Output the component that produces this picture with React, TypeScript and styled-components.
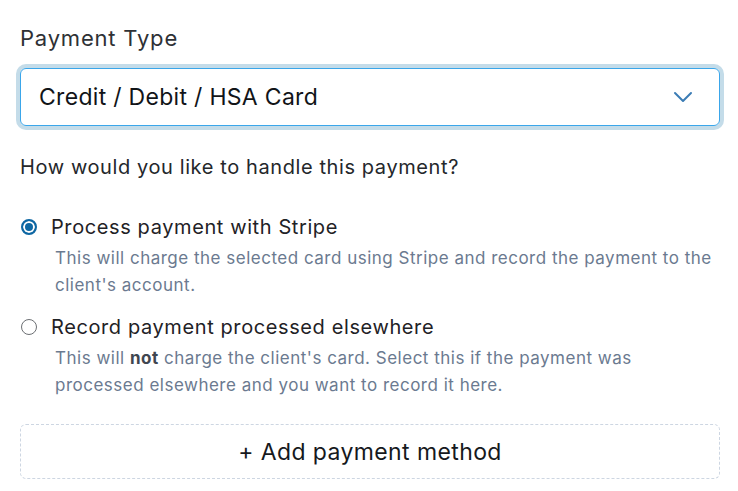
import React, { useState } from "react";
import styled, { createGlobalStyle } from "styled-components";

const GlobalStyle = createGlobalStyle`
  html, body {
    margin: 0;
    padding: 0;
    background: #ffffff;
  }
  body {
    font-family: Inter, "Liberation Sans", sans-serif;
    color: #1f2328;
  }
`;

const Page = styled.div`
  width: 700px;
  padding: 24px 0 0 20px;
  display: flex;
  flex-direction: column;
`;

const FieldLabel = styled.label`
  font-size: 22px;
  letter-spacing: 0.8px;
  line-height: 28px;
  color: #2e3135;
  margin-bottom: 16px;
`;

const SelectBox = styled.div`
  position: relative;
  height: 56px;
  border: 1px solid #3aa6ea;
  border-radius: 6px;
  box-shadow: 0 0 0 4px #c4dce9;
  display: flex;
  align-items: center;
  padding: 0 18px;
  font-size: 23px;
  letter-spacing: 0.3px;
  color: #111418;
`;

const SelectValue = styled.span`
  flex: 1;
`;

const Chevron = styled.svg`
  width: 20px;
  height: 20px;
  margin-right: 8px;
  color: #3b7cb5;
`;

const Question = styled.p`
  margin: 28px 0 0;
  font-size: 20px;
  letter-spacing: 0.6px;
  line-height: 26px;
  color: #24272b;
`;

const Options = styled.div`
  margin-top: 34px;
  display: flex;
  flex-direction: column;
  gap: 15px;
`;

const Option = styled.div`
  display: flex;
  flex-direction: column;
  cursor: pointer;
`;

const OptionHead = styled.div`
  display: flex;
  align-items: center;
  gap: 14px;
  height: 26px;
`;

const Radio = styled.span<{ $checked: boolean }>`
  width: 16px;
  height: 16px;
  box-sizing: border-box;
  border-radius: 50%;
  margin-left: 1px;
  border: ${(p) => (p.$checked ? "2px solid #0e67a3" : "1px solid #6c6f73")};
  background: ${(p) => (p.$checked ? "#0e67a3" : "#fff")};
  box-shadow: ${(p) => (p.$checked ? "inset 0 0 0 2px #fff" : "none")};
  flex-shrink: 0;
`;

const OptionTitle = styled.span`
  font-size: 20px;
  letter-spacing: 0.6px;
  color: #1f2226;
`;

const OptionDesc = styled.p`
  margin: 5px 0 0 35px;
  font-size: 17px;
  letter-spacing: 0.5px;
  line-height: 27px;
  color: #6b7a90;

  strong {
    color: #3f4650;
    font-weight: 700;
  }
`;

const AddButton = styled.button`
  margin-top: 25px;
  height: 55px;
  border: 1px dashed #cdd6e2;
  border-radius: 6px;
  background: #fff;
  font-family: inherit;
  font-size: 23px;
  letter-spacing: 0.4px;
  color: #16191d;
  cursor: pointer;
`;

export default function App() {
  const [mode, setMode] = useState("stripe");

  return (
    <>
      <GlobalStyle />
      <Page>
        <FieldLabel>Payment Type</FieldLabel>
        <SelectBox>
          <SelectValue>Credit / Debit / HSA Card</SelectValue>
          <Chevron viewBox="0 0 20 20" fill="none" stroke="currentColor" strokeWidth="2" strokeLinecap="round" strokeLinejoin="round">
            <path d="M2 6l8 8 8-8" />
          </Chevron>
        </SelectBox>

        <Question>How would you like to handle this payment?</Question>

        <Options>
          <Option onClick={() => setMode("stripe")}>
            <OptionHead>
              <Radio $checked={mode === "stripe"} />
              <OptionTitle>Process payment with Stripe</OptionTitle>
            </OptionHead>
            <OptionDesc>
              This will charge the selected card using Stripe and record the payment to the client's account.
            </OptionDesc>
          </Option>
          <Option onClick={() => setMode("external")}>
            <OptionHead>
              <Radio $checked={mode === "external"} />
              <OptionTitle>Record payment processed elsewhere</OptionTitle>
            </OptionHead>
            <OptionDesc>
              This will <strong>not</strong> charge the client's card. Select this if the payment was processed elsewhere and you want to record it here.
            </OptionDesc>
          </Option>
        </Options>

        <AddButton>+ Add payment method</AddButton>
      </Page>
    </>
  );
}
